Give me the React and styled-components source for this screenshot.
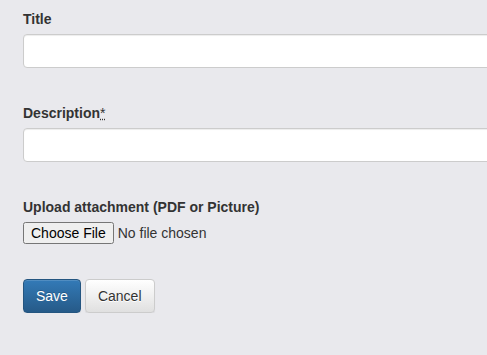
import styled, { createGlobalStyle } from "styled-components"

const Global = createGlobalStyle`
html, body {
  margin: 0;
  padding: 0;
  background: #e9e9ed;
  overflow: hidden;
}
body {
  font-family: "Liberation Sans", Arial, sans-serif;
  font-size: 14px;
  line-height: 1.42857;
  color: #333;
}
`

const App = () => {
    return (
        <>
        <Global />
        <Form>
            <Group>
                <Label>Title</Label>
                <Input type="text" />
            </Group>
            <Group>
                <Label>Description<Req title="required">*</Req></Label>
                <Input type="text" />
            </Group>
            <Group>
                <Label>Upload attachment (PDF or Picture)</Label>
                <FileInput type="file" />
            </Group>
            <Actions>
                <Button $primary>Save</Button>
                <Button>Cancel</Button>
            </Actions>
        </Form>
        </>
    )
}

export default App

const Form = styled.form`
padding: 9px 0 0 23px;
width: 560px;
`

const Group = styled.div`
display: flex;
flex-direction: column;
align-items: flex-start;
margin-bottom: 35px;
`

const Label = styled.label`
display: block;
font-weight: bold;
margin-bottom: 5px;
line-height: 20px;
height: 20px;
`

const Req = styled.abbr`
font-weight: normal;
text-decoration: underline dotted;
cursor: help;
`

const Input = styled.input`
box-sizing: border-box;
width: 100%;
height: 34px;
padding: 6px 12px;
font: inherit;
background: #fff;
border: 1px solid #ccc;
border-radius: 4px;
box-shadow: inset 0 1px 1px rgba(0, 0, 0, .075);
`

const FileInput = styled.input`
font-family: "Liberation Sans", Arial, sans-serif;
font-size: 14px;
color: #333;
`

const Actions = styled.div`
display: flex;
gap: 4px;
`

const Button = styled.button`
font-family: "Liberation Sans", Arial, sans-serif;
font-size: 14px;
line-height: 20px;
padding: 6px 12px;
border-radius: 4px;
border: 1px solid ${p => p.$primary ? "#245580" : "#ccc"};
color: ${p => p.$primary ? "#fff" : "#333"};
background: ${p => p.$primary
    ? "linear-gradient(to bottom, #337ab7 0, #265a88 100%)"
    : "linear-gradient(to bottom, #fff 0, #e0e0e0 100%)"};
text-shadow: ${p => p.$primary ? "0 -1px 0 rgba(0,0,0,.2)" : "0 1px 0 #fff"};
box-shadow: inset 0 1px 0 rgba(255,255,255,.15), 0 1px 1px rgba(0,0,0,.075);
cursor: pointer;
`
